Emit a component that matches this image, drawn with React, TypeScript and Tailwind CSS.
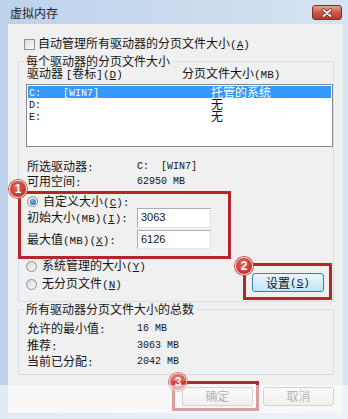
import React from "react";

const M = ({ children, s }: { children: React.ReactNode; s?: boolean }) => (
  <span
    className={
      s
        ? "font-['Liberation_Mono',monospace] text-[10px] whitespace-pre"
        : "font-['Liberation_Mono',monospace] text-[11px] whitespace-pre"
    }
  >
    {children}
  </span>
);

const Key = ({ k }: { k: string }) => (
  <M>
    (<span className="underline underline-offset-1">{k}</span>)
  </M>
);

const Badge = ({ n, className }: { n: string; className: string }) => (
  <div
    className={
      "absolute w-[18px] h-[18px] rounded-full border border-[#f3d0cc] bg-[radial-gradient(circle_at_40%_35%,#e6645a,#b41f1f)] shadow-[0_0_0_1px_#c2554f] flex items-center justify-center text-white text-[12px] leading-[12px] font-bold font-['Liberation_Sans',sans-serif] " +
      className
    }
  >
    {n}
  </div>
);

const Radio = ({ on }: { on?: boolean }) => (
  <div className="w-[11px] h-[11px] shrink-0 rounded-full border border-[#8e8f8f] bg-linear-to-br from-[#d6d6d6] to-[#fafafa] flex items-center justify-center">
    {on && (
      <div className="w-[6px] h-[6px] rounded-full bg-[radial-gradient(circle_at_40%_35%,#7fb6ee,#1c4f9c)]" />
    )}
  </div>
);

export default function App() {
  return (
    <div className="relative w-[348px] h-[419px] overflow-hidden bg-linear-to-r from-[#bdd2eb] to-[#d6e3f2] text-[12px] leading-[12px] text-[#141414] font-['Noto_Sans_CJK_SC','Noto_Sans',sans-serif]">
      {/* title bar */}
      <div className="h-[24px] flex items-start">
        <div className="ml-[10px] mt-[5px] text-[12px] leading-[16px] text-[#222]">虚拟内存</div>
        <div className="ml-auto mt-[5px] mr-[6px] w-[30px] h-[15px] rounded-[3px] border border-[#7a2f2a] bg-linear-to-b from-[#e5a193] via-[#d0574a] to-[#b8372d] flex items-center justify-center">
          <svg width="12" height="10" viewBox="0 0 12 10">
            <path d="M2.5 2 L9.5 8 M9.5 2 L2.5 8" stroke="#5a1a15" strokeWidth="3.4" strokeLinecap="round" />
            <path d="M2.5 2 L9.5 8 M9.5 2 L2.5 8" stroke="#fff" strokeWidth="2" strokeLinecap="round" />
          </svg>
        </div>
      </div>

      {/* client */}
      <div className="ml-[8px] mr-[5px] h-[389px] bg-[#f0f0f0] flex flex-col">
        <div className="mt-[12px] h-[16px] flex items-center ml-[16px]">
          <div className="w-[11px] h-[11px] border border-[#8e8f8f] bg-linear-to-br from-[#dcdcdc] to-[#fafafa]" />
          <span className="ml-[3px] leading-[16px]">
            自动管理所有驱动器的分页文件大小<Key k="A" />
          </span>
        </div>

        <fieldset className="mt-[3px] ml-[10px] mr-[9px] border border-[#d5dfe5] pb-[1px] min-w-0">
          <legend className="ml-[5px] px-[2px] leading-[12px]">每个驱动器的分页文件大小</legend>
          <div className="h-[13px] flex items-center ml-[8px] leading-[13px]">
            <span className="w-[155px]">
              驱动器 <M>[</M>卷标<M>]</M>
              <Key k="D" />
            </span>
            <span>
              分页文件大小<M>(MB)</M>
            </span>
          </div>

          <div className="mt-[4px] ml-[7px] h-[63px] border border-[#828790] bg-white pt-[1px] px-[1px]">
            <div className="h-[12px] bg-[#3399ff] text-white flex items-center leading-[12px]">
              <span className="w-[35px] pl-[1px]">
                <M s>C:</M>
              </span>
              <span className="w-[148px]">
                <M s>[WIN7]</M>
              </span>
              <span>托管的系统</span>
            </div>
            <div className="h-[12px] flex items-center leading-[12px]">
              <span className="w-[183px] pl-[1px]">
                <M s>D:</M>
              </span>
              <span>无</span>
            </div>
            <div className="h-[12px] flex items-center leading-[12px]">
              <span className="w-[183px] pl-[1px]">
                <M s>E:</M>
              </span>
              <span>无</span>
            </div>
          </div>

          <div className="mt-[12px] ml-[8px] h-[15px] flex items-center">
            <span className="w-[110px]">
              所选驱动器<M>:</M>
            </span>
            <M s>C:  [WIN7]</M>
          </div>
          <div className="ml-[8px] h-[15px] flex items-center">
            <span className="w-[110px]">
              可用空间<M>:</M>
            </span>
            <M s>62950 MB</M>
          </div>

          <div className="relative mt-[2px] -ml-[1px] w-[213px] h-[68px] border-[3px] border-[#b3262c]">
            <Badge n="1" className="-left-[12px] -top-[14px]" />
            <div className="mt-[1px] h-[13px] flex items-center ml-[6px]">
              <Radio on />
              <span className="ml-[5px]">
                自定义大小<Key k="C" />
                <M>:</M>
              </span>
            </div>
            <div className="h-[20px] flex items-center ml-[6px]">
              <span className="w-[110px]">
                初始大小<M>(MB)</M>
                <Key k="I" />
                <M>:</M>
              </span>
              <div className="w-[74px] h-[20px] border border-[#abadb3] border-b-[#e3e9ef] border-r-[#dbdfe6] bg-white flex items-center pl-[3px] pb-[2px] font-['Liberation_Sans',sans-serif] text-[11px]">
                3063
              </div>
            </div>
            <div className="mt-[2px] h-[19px] flex items-center ml-[6px]">
              <span className="w-[110px]">
                最大值<M>(MB)</M>
                <Key k="X" />
                <M>:</M>
              </span>
              <div className="w-[74px] h-[19px] border border-[#abadb3] border-b-[#e3e9ef] border-r-[#dbdfe6] bg-white flex items-center pl-[3px] pb-[1px] font-['Liberation_Sans',sans-serif] text-[11px]">
                6126
              </div>
            </div>
          </div>

          <div className="flex">
            <div className="ml-[7px] flex flex-col">
              <div className="h-[14px] flex items-center">
                <Radio />
                <span className="ml-[5px]">
                  系统管理的大小<Key k="Y" />
                </span>
              </div>
              <div className="mt-[4px] h-[14px] flex items-center">
                <Radio />
                <span className="ml-[5px]">
                  无分页文件<Key k="N" />
                </span>
              </div>
            </div>
            <div className="relative ml-auto mr-[1px] mt-[4px] w-[89px] h-[37px] border-[3px] border-[#b3262c]">
              <Badge n="2" className="-left-[11px] -top-[9px]" />
              <div className="ml-[6px] mt-[7px] w-[72px] h-[19px] rounded-[3px] border border-[#3c7fb1] bg-linear-to-b from-[#eaf6fd] to-[#bee6fd] flex items-center justify-center leading-[12px]">
                设置<Key k="S" />
              </div>
            </div>
          </div>
        </fieldset>

        <fieldset className="mt-[1px] ml-[10px] mr-[9px] border border-[#d5dfe5] pb-[3px] min-w-0">
          <legend className="ml-[5px] px-[2px] leading-[12px]">所有驱动器分页文件大小的总数</legend>
          <div className="mt-[6px] ml-[8px] h-[16.5px] flex items-center">
            <span className="w-[110px]">
              允许的最小值<M>:</M>
            </span>
            <M s>16 MB</M>
          </div>
          <div className="ml-[8px] h-[16.5px] flex items-center">
            <span className="w-[110px]">
              推荐<M>:</M>
            </span>
            <M s>3063 MB</M>
          </div>
          <div className="ml-[8px] h-[16.5px] flex items-center">
            <span className="w-[110px]">
              当前已分配<M>:</M>
            </span>
            <M s>2042 MB</M>
          </div>
        </fieldset>

        <div className="flex justify-end mr-[9px] mt-[6px]">
          <div className="relative w-[87px] h-[30px] border-[3px] border-[#b3262c]">
            <Badge n="3" className="-left-[6px] -top-[11px] opacity-80" />
            <div className="ml-[7px] mt-[3px] w-[71px] h-[19px] rounded-[3px] border border-[#9a9a9a] bg-linear-to-b from-[#f4f4f4] to-[#dcdcdc] flex items-center justify-center leading-[12px] text-[#555]">
              确定
            </div>
          </div>
          <div className="ml-[4px] mt-[6px] w-[71px] h-[19px] rounded-[3px] border border-[#9a9a9a] bg-linear-to-b from-[#f4f4f4] to-[#dcdcdc] flex items-center justify-center leading-[12px] text-[#555]">
            取消
          </div>
        </div>
      </div>

      {/* faded watermark band */}
      <div className="absolute left-0 right-0 top-[385px] bottom-0 bg-white/55 pointer-events-none" />
    </div>
  );
}
